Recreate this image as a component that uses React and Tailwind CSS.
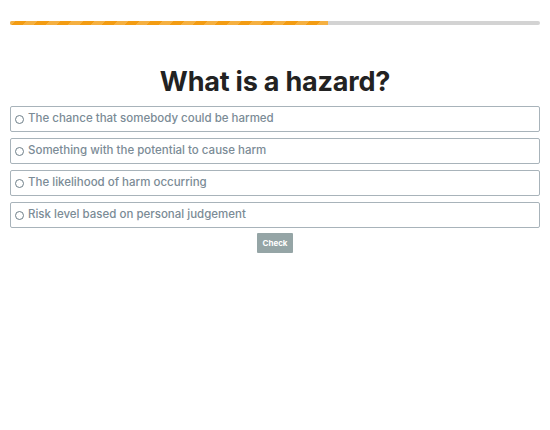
import React from "react";

const options = [
  "The chance that somebody could be harmed",
  "Something with the potential to cause harm",
  "The likelihood of harm occurring",
  "Risk level based on personal judgement",
];

export default function App() {
  return (
    <div
      className="w-[550px] h-[430px] bg-white px-[10px] pt-[21px]"
      style={{ fontFamily: "Inter, 'Open Sans', sans-serif" }}
    >
      <div className="h-[4px] w-full rounded-full bg-[#d3d3d3] overflow-hidden flex">
        <div
          className="h-full w-[60%] bg-[#f39c12]"
          style={{
            backgroundImage:
              "repeating-linear-gradient(-45deg, rgba(255,255,255,0.2) 0 8px, transparent 8px 16px)",
          }}
        />
      </div>

      <h1 className="mt-[40px] text-center text-[27px] leading-[34px] font-bold text-[#222] tracking-[-0.2px]">
        What is a hazard?
      </h1>

      <div className="mt-[7px] flex flex-col gap-[6px]">
        {options.map((o) => (
          <label
            key={o}
            className="h-[26px] flex items-center gap-[4px] pl-[4px] border border-[#a8b3ba] rounded-[2px] text-[11.5px] leading-none font-medium text-[#7b8b96] cursor-pointer"
          >
            <span className="w-[9px] h-[9px] rounded-full border-[1.5px] border-[#6e7f89] shrink-0" />
            <span>{o}</span>
          </label>
        ))}
      </div>

      <div className="mt-[5px] flex justify-center">
        <button className="w-[36px] h-[20px] bg-[#95a5a6] text-white text-[8px] font-bold rounded-[1px]">
          Check
        </button>
      </div>
    </div>
  );
}
